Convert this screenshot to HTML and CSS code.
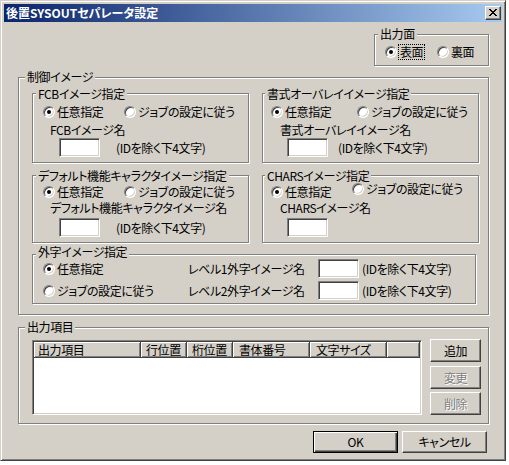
FILE: index.html
```html
<!DOCTYPE html>
<html lang="ja">
<head>
<meta charset="utf-8">
<title>後置SYSOUTセパレータ設定</title>
<link rel="stylesheet" href="styles.css">
</head>
<body>
<div class="window">
  <div class="titlebar">
    <span class="title">後置SYSOUTセパレータ設定</span>
    <span class="close"><svg width="8" height="7" viewBox="0 0 8 7"><path d="M0 0h2v1H0zM6 0h2v1H6zM1 1h2v1H1zM5 1h2v1H5zM2 2h4v1H2zM3 3h2v1H3zM2 4h4v1H2zM1 5h2v1H1zM5 5h2v1H5zM0 6h2v1H0zM6 6h2v1H6z" fill="#000"/></svg></span>
  </div>
  <div class="client">
    <div class="group g-face">
      <div class="cap">出力面</div>
      <div class="face-row">
        <div class="opt w52"><span class="radio on"></span><span class="focus">表面</span></div>
        <div class="opt"><span class="radio"></span><span class="otext">裏面</span></div>
      </div>
    </div>

    <div class="group g-ctrl">
      <div class="cap cap-big">制御イメージ</div>
      <div class="ctrl-grid">
        <div class="group sub sub-l h70">
          <div class="cap">FCBイメージ指定</div>
          <div class="radios mt5">
            <div class="opt w81"><span class="radio on"></span><span class="otext">任意指定</span></div>
            <div class="opt"><span class="radio"></span><span class="otext">ジョブの設定に従う</span></div>
          </div>
          <div class="lbl mt5 ml7">FCBイメージ名</div>
          <div class="tbrow mt2">
            <span class="textbox ml16"></span><span class="note ml16">(IDを除く下4文字)</span>
          </div>
        </div>

        <div class="group sub sub-r h70">
          <div class="cap">書式オーバレイイメージ指定</div>
          <div class="radios mt5">
            <div class="opt w86"><span class="radio on"></span><span class="otext">任意指定</span></div>
            <div class="opt"><span class="radio"></span><span class="otext">ジョブの設定に従う</span></div>
          </div>
          <div class="lbl mt5 ml9">書式オーバレイイメージ名</div>
          <div class="tbrow mt2">
            <span class="textbox ml16"></span><span class="note ml10">(IDを除く下4文字)</span>
          </div>
        </div>

        <div class="group sub sub-l h68">
          <div class="cap">デフォルト機能キャラクタイメージ指定</div>
          <div class="radios mt3">
            <div class="opt w81"><span class="radio on"></span><span class="otext">任意指定</span></div>
            <div class="opt"><span class="radio"></span><span class="otext">ジョブの設定に従う</span></div>
          </div>
          <div class="lbl mt3 ml7">デフォルト機能キャラクタイメージ名</div>
          <div class="tbrow mt4">
            <span class="textbox ml16"></span><span class="note ml16">(IDを除く下4文字)</span>
          </div>
        </div>

        <div class="group sub sub-r h68">
          <div class="cap">CHARSイメージ指定</div>
          <div class="radios mt3">
            <div class="opt w81"><span class="radio on"></span><span class="otext">任意指定</span></div>
            <div class="opt raised"><span class="radio"></span><span class="otext">ジョブの設定に従う</span></div>
          </div>
          <div class="lbl mt3 ml9">CHARSイメージ名</div>
          <div class="tbrow mt4">
            <span class="textbox ml16"></span>
          </div>
        </div>

        <div class="group sub sub-l gaiji">
          <div class="cap">外字イメージ指定</div>
          <div class="grow first">
            <div class="opt"><span class="radio on"></span><span class="otext">任意指定</span></div>
            <span class="lbl">レベル1外字イメージ名</span>
            <span class="textbox"></span>
            <span class="note ml3">(IDを除く下4文字)</span>
          </div>
          <div class="grow second">
            <div class="opt"><span class="radio"></span><span class="otext">ジョブの設定に従う</span></div>
            <span class="lbl">レベル2外字イメージ名</span>
            <span class="textbox"></span>
            <span class="note ml3">(IDを除く下4文字)</span>
          </div>
        </div>
      </div>
    </div>

    <div class="group g-items">
      <div class="cap cap-big">出力項目</div>
      <div class="items-body">
        <div class="listbox">
          <div class="lv-head">
            <span class="hc c1">出力項目</span>
            <span class="hc c2">行位置</span>
            <span class="hc c3">桁位置</span>
            <span class="hc c4">書体番号</span>
            <span class="hc c5">文字サイズ</span>
            <span class="hc c6"></span>
          </div>
        </div>
        <div class="side-btns">
          <button class="btn small">追加</button>
          <button class="btn small dis b2">変更</button>
          <button class="btn small dis b3">削除</button>
        </div>
      </div>
    </div>

    <div class="footer">
      <button class="btn big default">OK</button>
      <button class="btn big cancel">キャンセル</button>
    </div>
  </div>
</div>
</body>
</html>
```

FILE: styles.css
```css
* { box-sizing: border-box; }

body {
  margin: 0;
  background: #ffffff;
  font-family: "Noto Sans CJK JP", "Noto Sans", sans-serif;
  font-size: 12px;
  line-height: 14px;
  color: #000;
  font-feature-settings: "palt";
}

.window {
  width: 506px;
  height: 461px;
  background: #d4d0c8;
  border: 1px solid;
  border-color: #d4d0c8 #404040 #404040 #d4d0c8;
  box-shadow: inset 1px 1px #fff, inset -1px -1px #808080;
  padding: 3px;
  overflow: hidden;
}

.titlebar {
  height: 18px;
  display: flex;
  align-items: center;
  background: linear-gradient(to right, #0a246a, #a6caf0);
}

.title {
  color: #fff;
  font-weight: bold;
  padding-left: 2px;
  line-height: 14px;
}

.close {
  margin-left: auto;
  margin-right: 1px;
  width: 16px;
  height: 14px;
  background: #d4d0c8;
  border: 1px solid;
  border-color: #fff #404040 #404040 #fff;
  box-shadow: inset -1px -1px #808080;
  display: flex;
  padding: 2px 0 0 3px;
}
.close svg { display: block; }

.client { letter-spacing: -0.4px; }

/* group boxes */
.group {
  border: 1px solid #808080;
  box-shadow: inset 1px 1px #fff, 1px 1px #fff;
}

.cap {
  width: fit-content;
  background: #d4d0c8;
  padding: 0 2px;
  line-height: 12px;
  margin: -6px 0 0 3px;
}
.cap-big { margin: -7px 0 0 6px; }

.g-face {
  width: 115px;
  height: 32px;
  margin: 12px 0 0 370px;
}
.g-face .cap { margin: -7px 0 0 3px; }
.face-row {
  display: flex;
  align-items: center;
  margin: 5px 0 0 10px;
  height: 14px;
}

.opt {
  display: flex;
  align-items: center;
  height: 14px;
  white-space: nowrap;
}
.w52 { width: 52px; }
.w81 { width: 81px; }
.w86 { width: 86px; }

.radio {
  flex: none;
  width: 12px;
  height: 12px;
  border-radius: 50%;
  background: #fff;
  border: 1px solid;
  border-color: #808080 #fff #fff #808080;
  box-shadow: inset 1px 1px #404040, inset -1px -1px #d4d0c8;
}
.radio.on::after {
  content: "";
  display: block;
  width: 4px;
  height: 4px;
  border-radius: 50%;
  background: #000;
  margin: 3px 0 0 3px;
}

.otext { margin-left: 2px; }
.focus {
  margin-left: 2px;
  padding: 0 1px;
  outline: 1px dotted #000;
  outline-offset: 0;
}

.g-ctrl {
  width: 471px;
  height: 238px;
  margin: 11px 0 0 14px;
}

.ctrl-grid {
  display: grid;
  grid-template-columns: 217px 217px;
  grid-template-rows: 70px 68px 50px;
  column-gap: 13px;
  row-gap: 12px;
  margin-top: 10px;
  padding-left: 13px;
}

.sub-l { padding-left: 10px; }
.sub-l .cap { margin-left: -7px; }
.sub-r { padding-left: 8px; }
.sub-r .cap { margin-left: -6px; }
.h70 { height: 70px; }
.h68 { height: 68px; }

.radios {
  display: flex;
  align-items: flex-start;
  height: 14px;
}
.raised { margin-top: -3px; }

.lbl { line-height: 12px; white-space: nowrap; }

.tbrow {
  display: flex;
  align-items: center;
  height: 19px;
}

.textbox {
  flex: none;
  width: 41px;
  height: 19px;
  background: #fff;
  border: 1px solid;
  border-color: #808080 #fff #fff #808080;
  box-shadow: inset 1px 1px #404040, inset -1px -1px #d4d0c8;
}

.note { white-space: nowrap; }

.mt2 { margin-top: 2px; }
.mt3 { margin-top: 3px; }
.mt4 { margin-top: 4px; }
.mt5 { margin-top: 5px; }
.ml3 { margin-left: 3px; }
.ml7 { margin-left: 7px; }
.ml9 { margin-left: 9px; }
.ml10 { margin-left: 10px; }
.ml16 { margin-left: 16px; }

.gaiji {
  grid-column: 1 / -1;
  width: 444px;
  height: 50px;
  margin-top: -1px;
}
.gaiji .cap {
  margin-top: -9px;
  margin-bottom: 2px;
  height: 11px;
  line-height: 11px;
}
.grow {
  display: grid;
  grid-template-columns: 145px 130px 41px auto;
  align-items: center;
  height: 19px;
}
.grow.second { margin-top: 3px; }

/* output items */
.g-items {
  width: 471px;
  height: 97px;
  margin: 12px 0 0 14px;
}
.items-body {
  display: flex;
  align-items: flex-start;
  margin-top: 7px;
  padding-left: 13px;
}
.listbox {
  width: 390px;
  height: 75px;
  background: #fff;
  border: 1px solid;
  border-color: #808080 #fff #fff #808080;
  box-shadow: inset 1px 1px #404040, inset -1px -1px #d4d0c8;
  padding: 1px;
}
.lv-head {
  display: flex;
  height: 16px;
}
.hc {
  height: 16px;
  background: #d4d0c8;
  border-right: 1px solid #404040;
  border-bottom: 1px solid #404040;
  box-shadow: inset 1px 1px #fff, inset -1px -1px #808080;
  padding-left: 5px;
  line-height: 15px;
  white-space: nowrap;
}
.c1 { width: 107px; padding-left: 4px; }
.c2 { width: 46px; }
.c3 { width: 46px; }
.c4 { width: 77px; padding-left: 6px; }
.c5 { width: 77px; padding-left: 6px; }
.c6 { flex: 1; }

.side-btns {
  display: flex;
  flex-direction: column;
  margin: -1px 0 0 8px;
}

.btn {
  font: inherit;
  letter-spacing: inherit;
  font-feature-settings: "palt";
  color: #000;
  background: #d4d0c8;
  border: 1px solid;
  border-color: #fff #404040 #404040 #fff;
  box-shadow: inset -1px -1px #808080;
  padding: 0;
  margin: 0;
  line-height: 14px;
}
.small { width: 51px; height: 23px; }
.b2 { margin-top: 4px; }
.b3 { margin-top: 3px; }
.dis {
  color: #808080;
  text-shadow: 1px 1px #fff;
}

.footer {
  display: flex;
  margin: 7px 0 0 309px;
}
.big { width: 85px; height: 22px; }
.default {
  border: 1px solid #000;
  box-shadow: inset 1px 1px #fff, inset -1px -1px #404040, inset -2px -2px #808080;
}
.cancel { margin-left: 4px; }
```
